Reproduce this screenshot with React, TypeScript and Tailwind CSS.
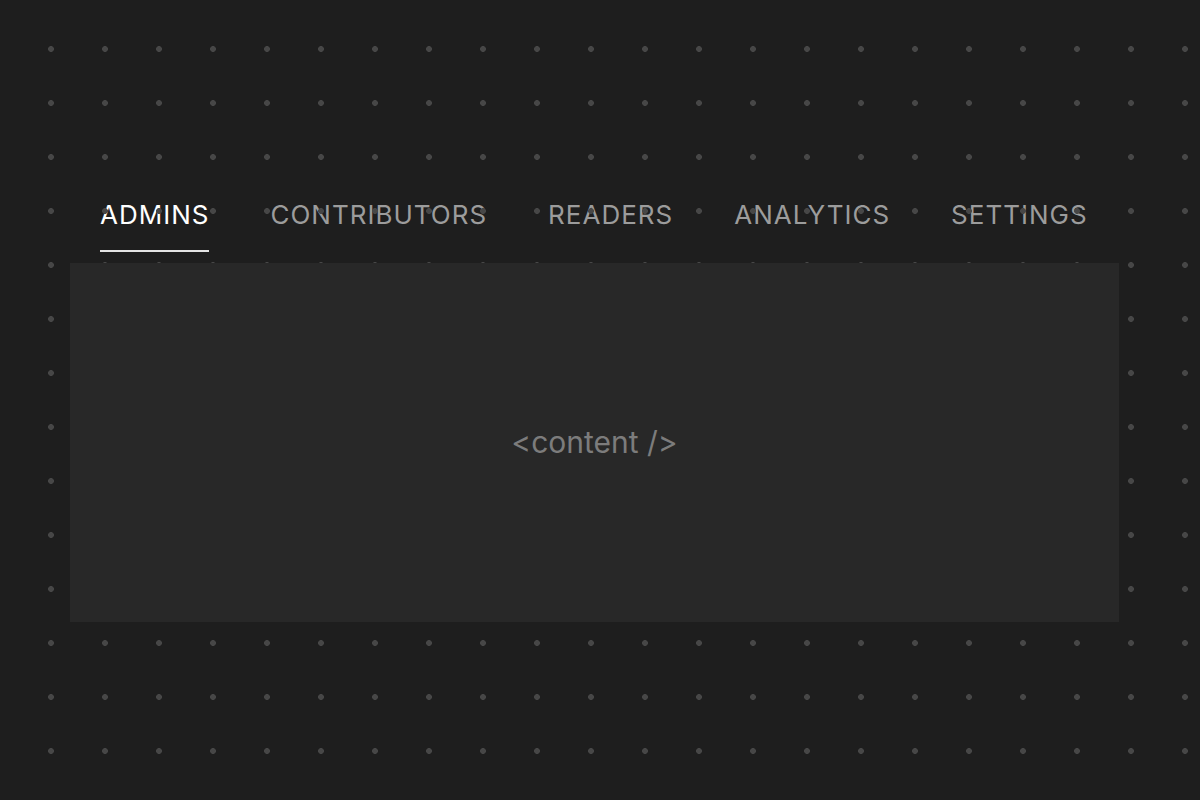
import { useState } from "react";

const tabs = ["Admins", "Contributors", "Readers", "Analytics", "Settings"];

export default function App() {
  const [active, setActive] = useState("Admins");

  return (
    <main
      className="relative min-h-screen h-[800px] overflow-hidden bg-[#1e1e1e]"
      style={{ fontFamily: "Inter, 'Noto Sans', sans-serif" }}
    >
      {/* dot grid, sits over the tabs but under the panel */}
      <div className="pointer-events-none absolute inset-0 z-10 bg-[radial-gradient(circle,#474747_2.6px,transparent_3.2px)] bg-[size:54px_54px] bg-[position:24px_22px]" />

      <section className="ml-[70px] w-[1049px] pt-[199px]">
        {/* TABS */}
        <nav className="flex gap-[61px] pl-[30px]">
          {tabs.map((t) => (
            <button
              key={t}
              onClick={() => setActive(t)}
              className={
                active === t
                  ? "border-b-2 border-[#e4e4e4] pb-[19px] text-[26px] leading-[32px] uppercase tracking-[1px] text-white"
                  : "border-b-2 border-transparent pb-[19px] text-[26px] leading-[32px] uppercase tracking-[1px] text-[#9c9c9c]"
              }
            >
              {t}
            </button>
          ))}
        </nav>

        {/* PANEL */}
        <div className="relative z-20 mt-[11px] flex h-[359px] items-center justify-center bg-[#282828]">
          <span className="text-[30px] text-[#7c7c7c]">&lt;content /&gt;</span>
        </div>
      </section>
    </main>
  );
}
